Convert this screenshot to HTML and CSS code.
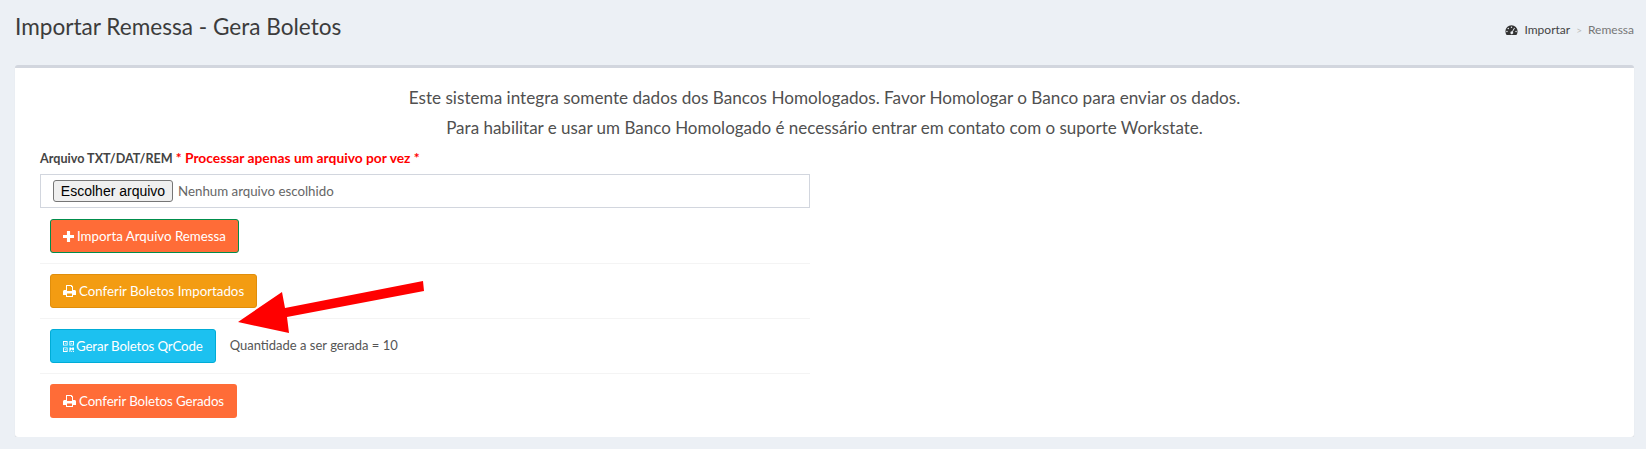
FILE: index.html

```html
<!DOCTYPE html>
<html lang="pt-BR">
<head>
    <meta charset="UTF-8">
    <meta name="viewport" content="width=device-width, initial-scale=1.0">
    <title>Importar Remessa</title>
    <link rel="stylesheet" href="styles.css">
</head>
<body>
    <header class="content-header">
        <h1>Importar Remessa - Gera Boletos</h1>
        <ol class="breadcrumb">
            <li class="crumb">
                <svg class="icon-gauge" viewBox="0 0 16 14"><path fill-rule="evenodd" d="M8 1a7.500 7.500 0 0 0-7.500 7.500c0 1.700.5 3.200 1.400 4.500h12.200c.9-1.300 1.400-2.800 1.400-4.500A7.500 7.500 0 0 0 8 1zM8 2.600a.9.900 0 1 1 0 1.800.9.900 0 0 1 0-1.800zM4 4.300a.9.900 0 1 1 0 1.800.9.900 0 0 1 0-1.800zM2.400 8a.9.900 0 1 1 0 1.800.9.900 0 0 1 0-1.800zM13.600 8a.9.900 0 1 1 0 1.800.9.900 0 0 1 0-1.800zM11.300 4.200l.9.500-2.600 4.500a1.700 1.700 0 1 1-1-.5z"/></svg>
                Importar
            </li>
            <li class="crumb-sep">&gt;</li>
            <li class="crumb-active">Remessa</li>
        </ol>
    </header>

    <section class="box">
        <p class="notice">Este sistema integra somente dados dos Bancos Homologados. Favor Homologar o Banco para enviar os dados.</p>
        <p class="notice notice-second">Para habilitar e usar um Banco Homologado é necessário entrar em contato com o suporte Workstate.</p>

        <div class="form-col">
            <label class="file-label">Arquivo TXT/DAT/REM <span class="warn">* Processar apenas um arquivo por vez *</span></label>
            <div class="file-input">
                <button type="button" class="file-btn">Escolher arquivo</button>
                <span class="file-name">Nenhum arquivo escolhido</span>
            </div>

            <div class="action-row">
                <a class="btn btn-orange btn-green-border">
                    <svg class="icon-plus" viewBox="0 0 12 12"><path d="M4.300 0h3.400v4.300H12v3.400H7.700V12H4.300V7.700H0V4.300h4.300z"/></svg>
                    Importa Arquivo Remessa
                </a>
            </div>
            <div class="action-row">
                <a class="btn btn-yellow">
                    <svg class="icon-print" viewBox="0 0 13 12"><path fill-rule="evenodd" d="M3 0h5.500L10 1.500V5h1.500c.8 0 1.500.7 1.500 1.500V10h-3v2H3v-2H0V6.500C0 5.700.7 5 1.500 5H3zM4 1v5h5V2H8V1zM4 8.500V11h5V8.500z"/></svg>
                    Conferir Boletos Importados
                </a>
            </div>
            <div class="action-row">
                <a class="btn btn-blue">
                    <svg class="icon-qr" viewBox="0 0 12 12"><path fill-rule="evenodd" d="M0 0h5v5H0zM1 1v3h3V1zM2 2h1v1H2zM7 0h5v5H7zM8 1v3h3V1zM9 2h1v1H9zM0 7h5v5H0zM1 8v3h3V8zM2 9h1v1H2zM7 7h2v1h1V7h2v3h-2V9H9v1H8v2H7zM9 11h1v1H9zM11 11h1v1h-1z"/></svg>
                    Gerar Boletos QrCode
                </a>
                <span class="qty">Quantidade a ser gerada = 10</span>
            </div>
            <div class="action-row">
                <a class="btn btn-orange btn-tight">
                    <svg class="icon-print" viewBox="0 0 13 12"><path fill-rule="evenodd" d="M3 0h5.500L10 1.500V5h1.500c.8 0 1.500.7 1.500 1.500V10h-3v2H3v-2H0V6.500C0 5.700.7 5 1.500 5H3zM4 1v5h5V2H8V1zM4 8.500V11h5V8.500z"/></svg>
                    Conferir Boletos Gerados
                </a>
            </div>
        </div>

        <svg class="arrow" viewBox="0 0 190 56"><polygon fill="#ff0000" points="0,41 44,11 47,27 185,0 186,10 49,36 51,52"/></svg>
    </section>
</body>
</html>
```

FILE: styles.css

```css
body {
    font-family: 'Lato', 'Noto Sans', sans-serif;
    font-size: 14px;
    margin: 0;
    background: #ecf0f5;
    color: #444;
}
.content-header {
    display: flex;
    justify-content: space-between;
    padding: 14px 12px 0 15px;
    height: 51px;
}
.content-header h1 {
    margin: 0;
    font-size: 22.6px;
    font-weight: 400;
    line-height: 26px;
    color: #3c3c3c;
}
.breadcrumb {
    display: flex;
    gap: 6px;
    list-style: none;
    margin: 1px 0 0;
    padding: 0;
    font-size: 12px;
    line-height: 30px;
    align-items: flex-start;
}
.crumb {
    display: flex;
    align-items: center;
    gap: 6px;
    height: 30px;
}
.icon-gauge {
    width: 13px;
    height: 12px;
    fill: #333;
}
.crumb-sep {
    color: #bbb;
    font-size: 10px;
}
.crumb-active {
    color: #777;
}
.box {
    position: relative;
    margin: 0 12px 0 15px;
    padding: 15px 10px 10px;
    height: 344px;
    background: white;
    border-top: 3px solid #d2d6de;
    border-radius: 3px;
    box-shadow: 0 1px 1px rgba(0,0,0,0.1);
}
.notice {
    margin: 0;
    text-align: center;
    font-size: 17.15px;
    line-height: 30px;
    height: 30px;
    color: #505050;
}
.notice-second {
    font-size: 17px;
}
.form-col {
    width: 50%;
    box-sizing: border-box;
    padding: 5px 15px 0;
}
.file-label {
    display: block;
    font-weight: 700;
    font-size: 12.6px;
    line-height: 20px;
    margin-bottom: 5px;
}
.warn {
    color: #ff0000;
    font-size: 13.8px;
}
.file-input {
    display: flex;
    align-items: center;
    height: 34px;
    box-sizing: border-box;
    margin-bottom: 1px;
    padding: 0 12px;
    border: 1px solid #d2d6de;
}
.file-btn {
    font-family: 'Liberation Sans', Arial, sans-serif;
    font-size: 14px;
    height: 22px;
    width: 120px;
    padding: 0;
    color: #000;
    background: #efefef;
    border: 1px solid #767676;
    border-radius: 3px;
}
.file-name {
    margin-left: 5px;
    font-size: 13.3px;
    color: #666;
}
.action-row {
    display: flex;
    align-items: center;
    height: 55px;
    padding: 0 10px;
    border-bottom: 1px solid #f4f4f4;
    box-sizing: border-box;
}
.action-row:last-child {
    height: 54px;
    border-bottom: none;
}
.btn {
    display: flex;
    align-items: center;
    gap: 3px;
    height: 34px;
    box-sizing: border-box;
    padding: 0 12px;
    font-size: 13.3px;
    color: white;
    border: 1px solid transparent;
    border-radius: 3px;
}
.btn-tight {
    letter-spacing: -0.1px;
}
.btn-orange {
    background: #ff6c37;
}
.btn-green-border {
    border-color: #008d4c;
}
.btn-yellow {
    background: #f39c12;
    border-color: #e08e0b;
}
.btn-blue {
    gap: 2px;
    letter-spacing: -0.15px;
    background: #1cc1f0;
    border-color: #00acd6;
}
.btn svg {
    fill: white;
    flex: none;
}
.icon-plus {
    width: 11px;
    height: 11px;
}
.icon-print {
    width: 13px;
    height: 12px;
}
.icon-qr {
    width: 11px;
    height: 11px;
}
.qty {
    margin-left: 14px;
    margin-top: -3px;
    font-size: 13px;
    color: #555;
}
.arrow {
    position: absolute;
    left: 223px;
    top: 213px;
    width: 190px;
    height: 56px;
}
```
